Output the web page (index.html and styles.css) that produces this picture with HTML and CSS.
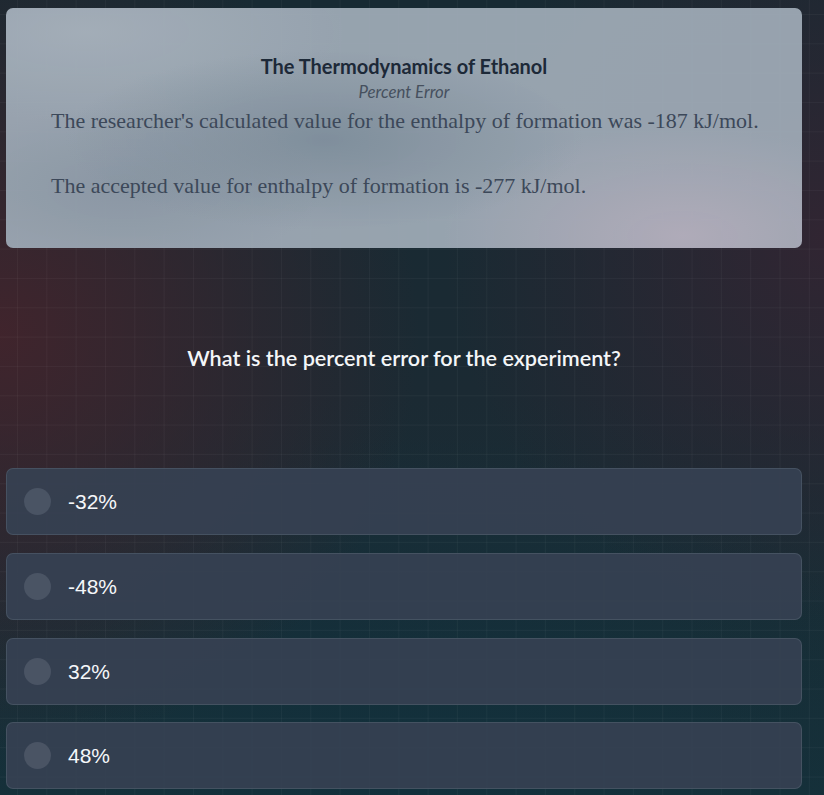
FILE: index.html
```html
<!DOCTYPE html>
<html lang="en">
<head>
<meta charset="utf-8">
<title>The Thermodynamics of Ethanol</title>
<link rel="stylesheet" href="styles.css">
</head>
<body>
<main class="page">
  <section class="card">
    <h1 class="title">The Thermodynamics of Ethanol</h1>
    <p class="subtitle">Percent Error</p>
    <p class="body-text first">The researcher's calculated value for the enthalpy of formation was -187 kJ/mol.</p>
    <p class="body-text">The accepted value for enthalpy of formation is -277 kJ/mol.</p>
  </section>
  <h2 class="question">What is the percent error for the experiment?</h2>
  <ul class="options">
    <li class="option"><span class="radio"></span><span class="label">-32%</span></li>
    <li class="option"><span class="radio"></span><span class="label">-48%</span></li>
    <li class="option"><span class="radio"></span><span class="label">32%</span></li>
    <li class="option"><span class="radio"></span><span class="label">48%</span></li>
  </ul>
</main>
</body>
</html>
```
FILE: styles.css
```css
html, body {
  margin: 0;
  padding: 0;
  height: 100%;
}
body {
  font-family: Lato, "Open Sans", sans-serif;
  background-color: #18272f;
  background-image:
    linear-gradient(to right, rgba(255,255,255,0.035) 1px, transparent 1px),
    linear-gradient(to bottom, rgba(255,255,255,0.035) 1px, transparent 1px),
    radial-gradient(ellipse 420px 420px at 0% 42%, rgba(66,36,44,0.95), rgba(66,36,44,0) 100%),
    radial-gradient(ellipse 380px 380px at 100% 30%, rgba(50,37,50,0.95), rgba(50,37,50,0) 100%),
    radial-gradient(ellipse 520px 360px at 50% 100%, rgba(18,48,60,1), rgba(18,48,60,0) 100%),
    linear-gradient(180deg, #172a33 0%, #1b2a33 50%, #163039 100%);
  background-size: 29.33px 29.33px, 29.33px 29.33px, 100% 100%, 100% 100%, 100% 100%, 100% 100%;
  background-position: 17px 14px, 17px 14px, 0 0, 0 0, 0 0, 0 0;
  overflow: hidden;
}
.page {
  width: 796px;
  padding: 8px 0 0 6px;
}
.card {
  border-radius: 7px;
  padding: 46px 45px 48.5px 45px;
  background-color: rgba(160,172,184,0.93);
  background-image:
    radial-gradient(ellipse 260px 90px at 40% 55%, rgba(120,136,150,0.75), rgba(120,136,150,0) 100%),
    radial-gradient(ellipse 200px 80px at 15% 75%, rgba(125,140,154,0.5), rgba(125,140,154,0) 100%),
    radial-gradient(ellipse 240px 110px at 85% 95%, rgba(178,172,186,0.9), rgba(178,172,186,0) 100%),
    radial-gradient(ellipse 260px 90px at 10% 10%, rgba(170,180,190,0.6), rgba(170,180,190,0) 100%);
}
.title {
  margin: 0;
  text-align: center;
  font-family: Lato, sans-serif;
  font-weight: 700;
  font-size: 20px;
  line-height: 24px;
  color: #1d2938;
}
.subtitle {
  margin: 3.8px 0 0;
  text-align: center;
  font-family: Lato, sans-serif;
  font-style: italic;
  font-size: 16.8px;
  line-height: 20px;
  color: #46505e;
}
.body-text {
  margin: 6.7px -25px 0 0;
  font-family: "Liberation Serif", "Times New Roman", serif;
  font-size: 22px;
  line-height: 26px;
  color: #3c4859;
}
.body-text.first {
  margin-bottom: 39px;
}
.body-text + .body-text {
  margin-top: 0;
}
.question {
  margin: 97.3px 0 0;
  text-align: center;
  font-family: Lato, sans-serif;
  font-weight: 600;
  font-size: 21.6px;
  line-height: 26px;
  color: #f4f6f8;
}
.options {
  list-style: none;
  margin: 97px 0 0;
  padding: 0;
  display: flex;
  flex-direction: column;
  gap: 17.67px;
}
.option {
  box-sizing: border-box;
  height: 67px;
  display: flex;
  align-items: center;
  gap: 17px;
  padding-left: 17px;
  border: 1px solid rgba(92,104,120,0.45);
  border-radius: 7px;
  background: rgba(54,65,82,0.92);
}
.radio {
  width: 27px;
  height: 27px;
  border-radius: 50%;
  background: #4a5464;
  flex: none;
}
.label {
  font-family: "Liberation Sans", Arial, sans-serif;
  font-size: 21px;
  line-height: 24px;
  padding-top: 1px;
  color: #f5f7fa;
}
```
